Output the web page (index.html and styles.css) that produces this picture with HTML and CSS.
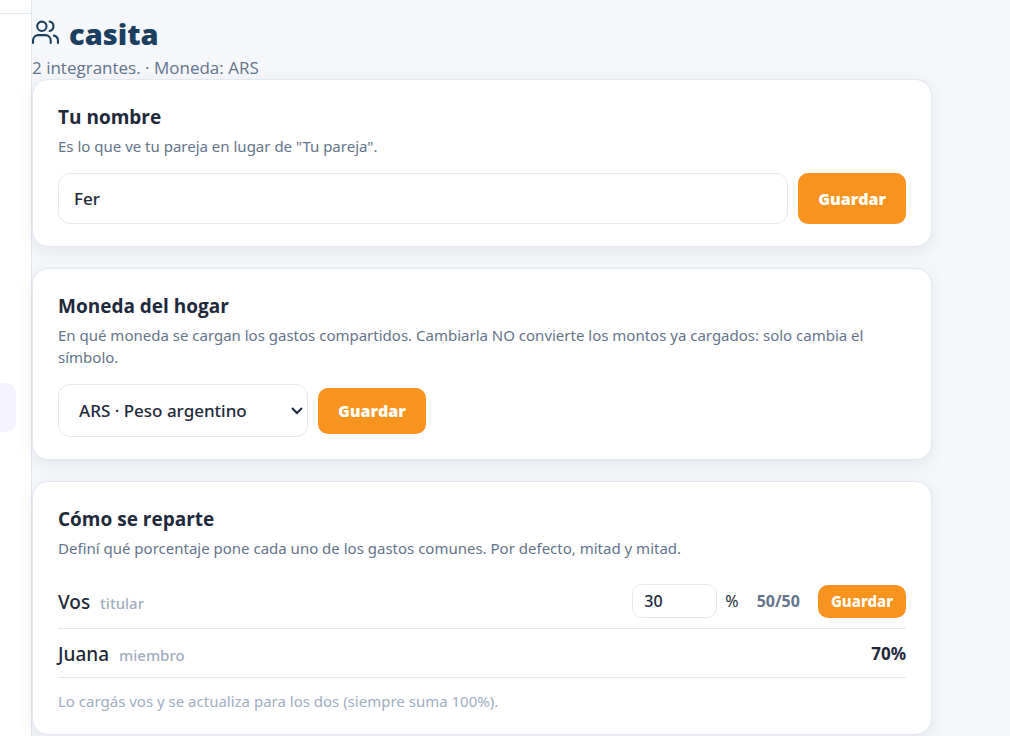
FILE: index.html
```html
<!DOCTYPE html>
<html lang="es">
<head>
<meta charset="utf-8">
<meta name="viewport" content="width=device-width, initial-scale=1">
<title>casita</title>
<link rel="stylesheet" href="styles.css">
</head>
<body>
<div class="app">
  <aside class="sidebar">
    <div class="sidebar-head"></div>
    <div class="sidebar-active"></div>
  </aside>
  <main class="content">
    <header class="page-head">
      <h1 class="page-title">
        <svg class="page-icon" viewBox="0 0 26 24" fill="none" stroke="currentColor" stroke-width="2" stroke-linecap="round" stroke-linejoin="round" aria-hidden="true">
          <circle cx="9.500" cy="6" r="4.500"/>
          <path d="M1 22v-2.500a5 5 0 0 1 5-5h7a5 5 0 0 1 5 5V22"/>
          <path d="M17 1.500a4.600 4.600 0 0 1 0 9"/>
          <path d="M21 15a5 5 0 0 1 4 5V22"/>
        </svg>
        casita
      </h1>
      <p class="page-sub">2 integrantes. · Moneda: ARS</p>
    </header>
    <div class="cards">
      <section class="card">
        <h2 class="card-title"><label for="name">Tu nombre</label></h2>
        <p class="card-desc">Es lo que ve tu pareja en lugar de "Tu pareja".</p>
        <form class="form form-name">
          <input class="field field-name" id="name" type="text" value="Fer">
          <button class="btn" type="button">Guardar</button>
        </form>
      </section>
      <section class="card">
        <h2 class="card-title"><label for="currency">Moneda del hogar</label></h2>
        <p class="card-desc">En qué moneda se cargan los gastos compartidos. Cambiarla NO convierte los montos ya cargados: solo cambia el símbolo.</p>
        <form class="form form-currency">
          <span class="select-wrap">
            <select class="field field-currency" id="currency">
              <option>ARS · Peso argentino</option>
            </select>
            <svg class="select-arrow" viewBox="0 0 12 8" fill="none" stroke="currentColor" stroke-width="2" aria-hidden="true"><path d="M1 1l5 5 5-5"/></svg>
          </span>
          <button class="btn" type="button">Guardar</button>
        </form>
      </section>
      <section class="card">
        <h2 class="card-title">Cómo se reparte</h2>
        <p class="card-desc">Definí qué porcentaje pone cada uno de los gastos comunes. Por defecto, mitad y mitad.</p>
        <ul class="members">
          <li class="member">
            <span class="member-name">Vos <small class="role">titular</small></span>
            <span class="share">
              <input class="field field-share" id="share" type="text" inputmode="numeric" value="30" aria-label="Porcentaje de Vos">
              <label class="percent" for="share">%</label>
              <button class="btn-text" type="button">50/50</button>
              <button class="btn btn-small" type="button">Guardar</button>
            </span>
          </li>
          <li class="member">
            <span class="member-name">Juana <small class="role">miembro</small></span>
            <strong class="member-share">70%</strong>
          </li>
        </ul>
        <p class="card-note">Lo cargás vos y se actualiza para los dos (siempre suma 100%).</p>
      </section>
    </div>
  </main>
</div>
</body>
</html>
```
FILE: styles.css
```css
* { box-sizing: border-box; }

body {
  margin: 0;
  background: #f5f7fb;
  color: #1e293b;
  font-family: "Segoe UI", "Open Sans", "Noto Sans", sans-serif;
  font-size: 16px;
}

h1, h2, p, ul { margin: 0; padding: 0; }

.app { display: flex; min-height: 100vh; }

.sidebar {
  flex: 0 0 32px;
  background: #fff;
  border-right: 1px solid #e2e8f0;
}

.sidebar-head { height: 14px; border-bottom: 1px solid #e2e8f0; }

.sidebar-active {
  width: 16px;
  height: 49px;
  margin-top: 369px;
  border-radius: 0 10px 10px 0;
  background: #f5f3ff;
}

.content { flex: 1; min-width: 0; padding-top: 15px; }

.page-title {
  display: flex;
  gap: 10px;
  color: #1b3f5f;
  font-size: 29px;
  font-weight: 800;
  line-height: 38px;
}

.page-icon { width: 27px; height: 25px; margin-top: 5px; }

.page-sub { padding-top: 3px; color: #64748b; font-size: 17px; line-height: 23px; }

.cards {
  display: flex;
  flex-direction: column;
  gap: 21px;
  max-width: 900px;
  padding-bottom: 20px;
}

.card {
  padding: 23px 25px 22px;
  background: #fff;
  border: 1px solid #e2e8f0;
  border-radius: 16px;
  box-shadow: 0 4px 16px rgba(15, 23, 42, 0.08);
}

.card-title { font-size: 19px; font-weight: 700; line-height: 29px; }

.card-desc {
  margin-top: 3px;
  color: #64748b;
  font-family: "Segoe UI", "Noto Sans", sans-serif;
  font-size: 15px;
  line-height: 22px;
}

.form { display: flex; gap: 10px; margin-top: 16px; }

.form-currency { align-items: center; }

.field {
  background: #fff;
  border: 1px solid #e2e8f0;
  border-radius: 12px;
  color: #1e293b;
  font-family: "Segoe UI", "Noto Sans", sans-serif;
  font-size: 17px;
  font-weight: 500;
}

.field-name { flex: 1; min-width: 0; height: 51px; padding: 0 15px; }

.select-wrap { position: relative; display: flex; }

.field-currency { width: 250px; height: 53px; padding: 0 20px; appearance: none; }

.select-arrow {
  position: absolute;
  top: 23px;
  right: 5px;
  width: 12px;
  height: 8px;
  pointer-events: none;
}

.field-share {
  width: 85px;
  height: 34px;
  padding: 0 11px;
  border-radius: 10px;
  font-size: 16px;
}

.btn {
  min-height: 46px;
  padding: 0 20px;
  background: #f7931e;
  border: 0;
  border-radius: 10px;
  color: #fff;
  font-family: inherit;
  font-size: 16px;
  font-weight: 800;
}

.btn-small { min-height: 33px; padding: 0 13px; font-size: 15px; }

.btn-text {
  padding: 0;
  margin: 0 18px;
  background: none;
  border: 0;
  color: #64748b;
  font-family: "Segoe UI", "Noto Sans", sans-serif;
  font-size: 16px;
  font-weight: 700;
}

.members { margin-top: 15px; list-style: none; }

.member {
  display: flex;
  align-items: center;
  justify-content: space-between;
  padding: 10px 0;
  border-bottom: 1px solid #e2e8f0;
  font-family: "Segoe UI", "Noto Sans", sans-serif;
  line-height: 27px;
}

.member-name { padding-top: 3px; font-size: 19px; font-weight: 500; line-height: 24px; }

.role { margin-left: 5px; color: #a0aec0; font-size: 15px; font-weight: 500; }

.member-share { font-size: 17px; font-weight: 700; }

.share { display: flex; align-items: center; }

.percent { margin-left: 8px; font-size: 16px; }

.card-note {
  margin-top: 12px;
  color: #a0aec0;
  font-family: "Segoe UI", "Noto Sans", sans-serif;
  font-size: 15px;
  line-height: 22px;
}
```
